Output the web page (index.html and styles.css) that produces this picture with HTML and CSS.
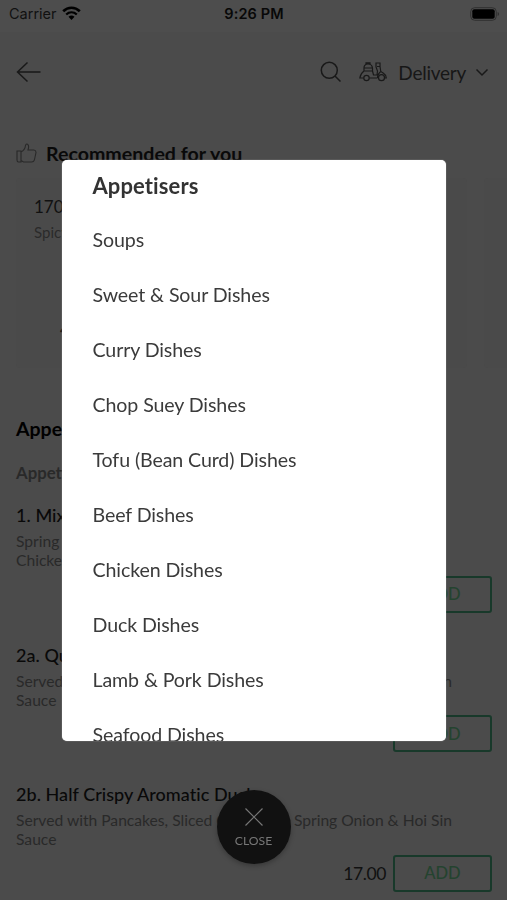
FILE: index.html
```html
<!DOCTYPE html>
<html lang="en">
<head>
<meta charset="utf-8">
<title>Menu</title>
<link rel="stylesheet" href="styles.css">
</head>
<body>
<main class="page">
  <div class="status">
    <div class="carrier"><span>Carrier</span>
      <svg width="19" height="15" viewBox="0 0 19 15" fill="none" stroke="#000"><path d="M1.2 5.2C6 .6 13 .6 17.800 5.200" stroke-width="2.700"/><path d="M4.200 8.500C7.300 5.700 11.700 5.700 14.800 8.500" stroke-width="2.300"/><path d="M6.500 10.700Q9.500 8.300 12.500 10.700L9.500 14Z" fill="#000" stroke="none"/></svg>
    </div>
    <span class="time">9:26 PM</span>
    <svg class="battery" width="30" height="14" viewBox="0 0 30 14"><rect x=".7" y=".7" width="25.600" height="12.600" rx="4" fill="none" stroke="#303030"/><rect x="2.300" y="2.300" width="22.400" height="9.400" rx="2" fill="#000"/><path d="M27.600 5v4q1.500-.6 1.500-2t-1.500-2" fill="#303030"/></svg>
  </div>
  <header class="header">
    <svg class="back" width="26" height="22" viewBox="0 0 26 22"><path d="M24.500 11H1.500M11.500 1.500L1.500 11l10 9.500"/></svg>
    <svg class="search" width="22" height="22" viewBox="0 0 22 22"><circle cx="9.300" cy="9.300" r="8"/><path d="M15 15l5.500 5.500"/></svg>
    <svg class="scooter" width="28" height="20" viewBox="0 0 28 20"><path d="M5 9V6Q5 2 9 2t4.500 4v3ZM5 6h8.500M7 2V.8h4V2M5 9Q1.500 11.500.8 16H4.800M10.200 16h8.300M13.500 9l1 4h3.500l.5-4-1.500-4V1h4v3.500h-3M21 4.500l.8 5 3 2q2.500 1.500 2.500 4.500h-1.500M18.500 16q0-4 3.300-6.500"/><circle cx="7.500" cy="16" r="2.700"/><circle cx="22.500" cy="15.700" r="3"/></svg>
    <span class="mode">Delivery</span>
    <svg class="chevron" width="14" height="9" viewBox="0 0 14 9"><path d="M1.500 1.500L7 7l5.500-5.500"/></svg>
  </header>
  <section class="recommended">
    <h2><svg class="thumb" width="21" height="20" viewBox="0 0 21 20"><path d="M1 8h4v11H2.500Q1 19 1 17ZM5 9q4-2 4.500-6.500Q10 .5 11.500 1.200 13.500 2.500 12 7h6q2 .3 2 2.500l-1.500 7Q18 19 15.500 19H7.500L5 17.500"/></svg>Recommended for you</h2>
    <div class="cards">
      <article class="card"><h3>170. Kung Po</h3><p>Spicy</p><b class="price">4.50</b></article>
      <article class="card"></article>
    </div>
  </section>
  <h2 class="category">Appetisers</h2>
  <h3 class="subcategory">Appetisers</h3>
  <article class="dish">
    <h3>1. Mixed Appetisers</h3>
    <p>Spring Roll, Spare Ribs, Sesame Prawn Toast, Seaweed, Satay<br>Chicken</p>
    <div class="buy"><button>ADD</button></div>
  </article>
  <article class="dish">
    <h3>2a. Quarter Crispy Aromatic Duck</h3>
    <p>Served with Pancakes, Sliced Cucumber, Spring Onion &amp; Hoi Sin Sauce</p>
    <div class="buy"><button>ADD</button></div>
  </article>
  <article class="dish">
    <h3>2b. Half Crispy Aromatic Duck</h3>
    <p>Served with Pancakes, Sliced Cucumber, Spring Onion &amp; Hoi Sin Sauce</p>
    <div class="buy"><span>17.00</span><button>ADD</button></div>
  </article>
</main>
<div class="overlay">
  <nav class="modal">
    <a class="current">Appetisers</a><a>Soups</a><a>Sweet &amp; Sour Dishes</a><a>Curry Dishes</a><a>Chop Suey Dishes</a><a>Tofu (Bean Curd) Dishes</a><a>Beef Dishes</a><a>Chicken Dishes</a><a>Duck Dishes</a><a>Lamb &amp; Pork Dishes</a><a>Seafood Dishes</a>
  </nav>
  <button class="close"><svg width="20" height="20" viewBox="0 0 20 20"><path d="M1.500 1.500l17 17m0-17l-17 17"/></svg><span>CLOSE</span></button>
</div>
</body>
</html>
```
FILE: styles.css
```css
* { box-sizing: border-box; }
html, body { height: 100%; overflow: hidden; }
body { margin: 0; background: #4b4b4b; font-family: Lato, sans-serif; color: #111; }
h2, h3, p { margin: 0; }
button { font-family: inherit; }
svg { flex: none; }
.page { height: 900px; overflow: hidden; }
.status { height: 32px; padding: 0 7px 5px 9px; display: grid; grid-template-columns: 1fr auto 1fr; align-items: center; font: 14.500px Inter, sans-serif; background: #4d4d4d; }
.carrier { display: flex; align-items: center; gap: 5px; color: #111; }
.time { margin-right: 1px; font-weight: 600; color: #080808; letter-spacing: .1px; }
.battery { justify-self: end; }
.header { height: 80px; padding: 0 18px 0 16px; display: flex; align-items: center; }
.header svg, .thumb { fill: none; stroke: #191919; stroke-width: 1.5; }
.header .search { margin-left: auto; }
.header .scooter { margin-left: 17px; stroke-width: 1.2; }
.mode { margin: 1px 9px 0 11px; font-size: 19px; line-height: 24px; color: #171717; letter-spacing: -.25px; }
.recommended { padding: 29px 0 0 16px; }
.recommended h2 { display: flex; align-items: center; gap: 9px; height: 24px; font-size: 19.600px; font-weight: 700; color: #090909; }
.recommended .thumb { stroke: #292929; stroke-width: 1.1; }
.cards { display: flex; gap: 17px; margin-top: 13px; overflow: hidden; }
.card { flex: none; width: 451px; height: 190px; padding: 17px 18px; border-radius: 4px; background: #4a4a4a; }
.card h3 { font-size: 17px; line-height: 24px; font-weight: 400; color: #111; }
.card p { margin-top: 3px; font-size: 15px; line-height: 20px; color: #2a2a2a; }
.price { display: block; margin: 78px 0 0 26px; font-size: 17px; line-height: 20px; font-weight: 400; }
.category { margin: 48px 16px 0; font-size: 19.500px; line-height: 26px; font-weight: 700; color: #000; }
.subcategory { margin: 20px 16px 19px; font-size: 16.800px; line-height: 22px; font-weight: 700; color: #292929; }
.dish { height: 139.500px; padding: 0 15px 0 16px; }
.dish h3 { font-size: 18px; line-height: 24px; font-weight: 500; color: #090909; letter-spacing: .05px; }
.dish p { width: 450px; margin-top: 5px; font-size: 15.630px; line-height: 19.300px; color: #292929; }
.buy { display: flex; justify-content: flex-end; align-items: center; gap: 7px; margin-top: 5px; font-size: 17.500px; color: #111; }
.buy span { letter-spacing: -.4px; }
.buy button { width: 99px; height: 37px; padding: 0; border: 2px solid #18392a; border-radius: 3px; background: none; color: #24432f; font-size: 16.500px; font-weight: 500; }
.overlay { position: fixed; inset: 0; display: flex; flex-direction: column; align-items: center; padding-top: 160px; }
.modal { width: 384px; height: 581px; overflow: hidden; padding-left: 31px; border-radius: 5px; background: #fff; box-shadow: 0 0 1px #ddd; }
.modal a { display: block; height: 55px; line-height: 55px; color: #3b3b3b; font-size: 19.600px; letter-spacing: -.1px; white-space: nowrap; }
.modal .current { height: 52px; line-height: 52px; font-size: 22px; font-weight: 700; color: #333; letter-spacing: .1px; font-variant-ligatures: none; }
.close { flex: none; width: 74px; height: 74px; margin-top: 49px; padding: 1px 0 0; display: flex; flex-direction: column; align-items: center; justify-content: center; gap: 6px; border: 0; border-radius: 50%; background: #111; color: #777; font-size: 12.200px; box-shadow: 0 2px 5px #0004; }
.close path { fill: none; stroke: #777; stroke-width: 1.2; }
```
